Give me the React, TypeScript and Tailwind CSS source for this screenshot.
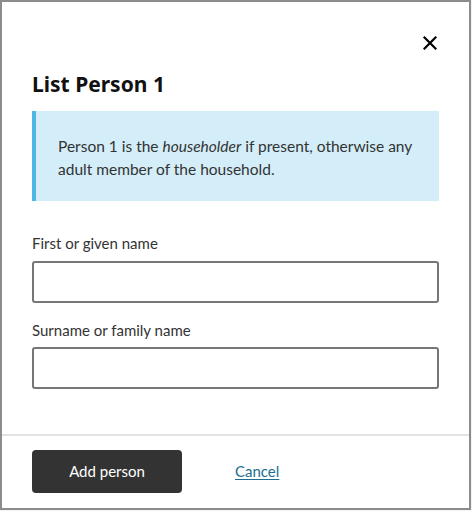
import React from "react";

export default function App() {
  return (
    <div className="w-[472px] h-[511px] bg-[#f3f3f3] overflow-hidden" style={{ fontFamily: 'Lato, "Noto Sans", sans-serif' }}>
      <div className="w-[471px] h-[510px] bg-white border-2 border-[#8c8c8c] flex flex-col">
        <div className="flex justify-end pt-[30px] pr-[28px]">
          <button className="w-[22px] h-[22px] flex items-center justify-center text-black">
            <svg width="14" height="14" viewBox="0 0 14 14" fill="none" stroke="currentColor" strokeWidth="2.2" strokeLinecap="square">
              <path d="M1.5 1.5 L12.5 12.5 M12.5 1.5 L1.5 12.5" />
            </svg>
          </button>
        </div>
        <div className="px-[30px] flex flex-col">
          <h1 className="mt-[16px] text-[21px] leading-[28px] font-bold text-[#111]" style={{ fontFamily: '"Noto Sans", sans-serif' }}>List Person 1</h1>
          <div className="mt-[13px] h-[90px] bg-[#d3eef9] border-l-4 border-[#4db8e3] pl-[22px] pr-2 pt-[4px] flex items-center">
            <p className="text-[15.5px] leading-[23px] text-[#333]">
              Person 1 is the <em>householder</em> if present, otherwise any adult member of the household.
            </p>
          </div>
          <label className="mt-[31px] text-[15px] leading-[22px] text-[#333]">First or given name</label>
          <input className="mt-[7px] h-[42px] w-full border-2 border-[#767676] rounded-[3px] outline-none px-2" />
          <label className="mt-[16px] text-[15px] leading-[22px] text-[#333]">Surname or family name</label>
          <input className="mt-[6px] h-[42px] w-full border-2 border-[#767676] rounded-[3px] outline-none px-2" />
        </div>
        <div className="mt-[45px] border-t-2 border-[#e3e3e3]" />
        <div className="px-[30px] pt-[14px] flex items-center">
          <button className="w-[150px] h-[43px] bg-[#333] rounded-[4px] text-white text-[15px]">Add person</button>
          <a href="#" className="ml-[53px] text-[15px] text-[#1d6f8f] underline underline-offset-2">Cancel</a>
        </div>
      </div>
    </div>
  );
}
